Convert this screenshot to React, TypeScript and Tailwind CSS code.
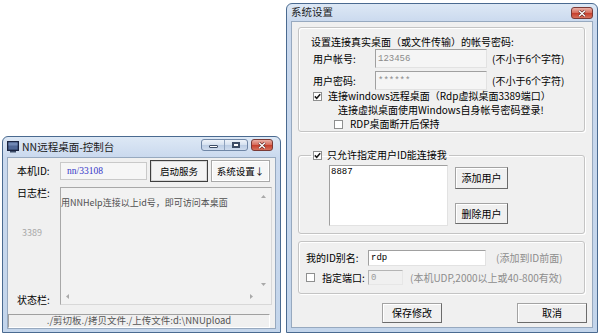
import React from "react";

function CheckBox({ checked = false }: { checked?: boolean }) {
  return (
    <span className="flex h-[9px] w-[9px] shrink-0 items-center justify-center border border-[#8e8f8f] bg-white">
      {checked && (
        <svg viewBox="0 0 7 7" className="h-[7px] w-[7px]">
          <path d="M0.8 3.4 L2.7 5.3 L6.2 1.2" fill="none" stroke="#1a1a1a" strokeWidth="1.5" />
        </svg>
      )}
    </span>
  );
}

function Btn({ children, className = "" }: { children: React.ReactNode; className?: string }) {
  return (
    <button className={`flex shrink-0 items-center justify-center border border-[#a3a3a3] border-r-[#6b6b6b] border-b-[#6b6b6b] bg-[#f0f0f0] text-[10px] leading-none text-black shadow-[inset_1px_1px_0_#ffffff] ${className}`}>
      {children}
    </button>
  );
}

function Arrow({ dir }: { dir: "up" | "down" | "left" | "right" }) {
  const d = {
    up: "M0 4 L2.5 1 L5 4 Z",
    down: "M0 1 L2.5 4 L5 1 Z",
    left: "M4 0 L1 2.5 L4 5 Z",
    right: "M1 0 L4 2.5 L1 5 Z",
  }[dir];
  return (
    <svg viewBox="0 0 5 5" className="h-[5px] w-[5px]">
      <path d={d} fill="#a9a9a9" />
    </svg>
  );
}

function MonitorIcon() {
  return (
    <svg viewBox="0 0 12 12" className="h-[12px] w-[12px] shrink-0">
      <rect x="0.5" y="0.5" width="11" height="9" fill="#27385a" stroke="#1a2440" />
      <rect x="1.5" y="1.5" width="9" height="7" fill="#4f6796" />
      <rect x="1.5" y="1.5" width="9" height="3" fill="#7088b4" />
      <rect x="3" y="10" width="6" height="1.5" fill="#3a4a66" />
    </svg>
  );
}

function CloseBtn({ className = "" }: { className?: string }) {
  return (
    <div className={`flex h-[12px] w-[22px] items-center justify-center rounded-[3px] border border-[#7a3a36] bg-[linear-gradient(180deg,#eab0a6_0%,#d8705f_45%,#c7412e_55%,#d6705c_100%)] ${className}`}>
      <svg viewBox="0 0 8 7" className="h-[7px] w-[8px]">
        <path d="M1 0.8 L7 6.2 M7 0.8 L1 6.2" stroke="#5a2420" strokeWidth="2.6" />
        <path d="M1 0.8 L7 6.2 M7 0.8 L1 6.2" stroke="#ffffff" strokeWidth="1.4" />
      </svg>
    </div>
  );
}

function LeftWindow() {
  return (
    <div className="absolute left-[2px] top-[136px] flex h-[197px] w-[279px] flex-col rounded-t-[6px] border border-[#4a6a90] bg-[linear-gradient(180deg,#dde8f5_0px,#cad9ee_20px,#c3d5eb_100%)] px-[4px] pb-[4px]">
      <div className="flex h-[20px] shrink-0 items-center">
        <MonitorIcon />
        <span className="ml-[3px] text-[10.5px] leading-none text-[#1b1b1b]">NN远程桌面-控制台</span>
        <div className="ml-auto mr-[3px] flex self-start pt-[2px]">
          <div className="flex h-[12px] overflow-hidden rounded-[3px] border border-[#6f86a6] bg-[linear-gradient(180deg,#eef3fa_0%,#d7e2f0_45%,#bccde4_55%,#cfdcee_100%)]">
            <div className="flex w-[23px] items-end justify-center border-r border-[#8ea2bd] pb-[2px]">
              <div className="h-[3px] w-[9px] rounded-[1px] border border-[#3d4d66] bg-white" />
            </div>
            <div className="flex w-[22px] items-center justify-center">
              <div className="h-[6px] w-[8px] border border-[#3d4d66] bg-white shadow-[inset_0_0_0_1px_#3d4d66]" />
            </div>
          </div>
          <CloseBtn className="ml-[3px]" />
        </div>
      </div>
      <div className="flex flex-1 flex-col border border-[#97a9bf] bg-[#f0f0f0] pt-[2px] text-[10px] leading-[12px]">
        <div className="flex h-[22px] items-center pl-[9px]">
          <span className="w-[43px]">本机ID:</span>
          <div className="flex h-[18px] w-[87px] items-center border border-[#c9c9c9] bg-[#f6f6f6] pl-[6px] font-['Liberation_Serif',serif] text-[9.5px] text-[#3535c8]">
            nn/33108
          </div>
          <button className="ml-[3px] flex h-[22px] w-[58px] items-center justify-center border border-[#3f3f3f] bg-[#f3f3f3] text-[9.5px] shadow-[inset_0_0_0_1px_#d6d6d6]">
            启动服务
          </button>
          <button className="ml-[3px] flex h-[22px] w-[59px] items-center justify-center border border-[#a9a9a9] bg-[#f6f6f6] text-[9.5px] shadow-[inset_0_0_0_1px_#ffffff]">
            系统设置↓
          </button>
        </div>
        <div className="mt-[5px] flex pl-[9px]">
          <div className="flex w-[43px] flex-col">
            <span>日志栏:</span>
            <span className="mt-[28px] pl-[5px] text-[9px] text-[#a8a8a8]">3389</span>
            <span className="mt-[55px]">状态栏:</span>
          </div>
          <div className="grid h-[118px] w-[212px] grid-cols-[1fr_16px] grid-rows-[1fr_15px] border border-[#a8a8a8] border-r-[#d8d8d8] border-b-[#d8d8d8] bg-[#f2f2f2]">
            <div className="overflow-hidden whitespace-nowrap pt-[9px] text-[9px] leading-[12px] text-[#505050]">
              用NNHelp连接以上id号，即可访问本桌面
            </div>
            <div className="flex flex-col items-center justify-between pb-[2px] pt-[6px]">
              <Arrow dir="up" />
              <Arrow dir="down" />
            </div>
            <div className="flex items-center justify-between pl-[4px] pr-[1px]">
              <Arrow dir="left" />
              <Arrow dir="right" />
            </div>
            <div />
          </div>
        </div>
        <div className="mt-[8px] flex h-[14px] w-[262px] items-center justify-center border border-[#a0a0a0] border-r-[#ffffff] border-b-[#ffffff] text-[9.5px] leading-none text-[#555555]">
          ./剪切板./拷贝文件./上传文件:d:\NNUpload
        </div>
      </div>
    </div>
  );
}

function RightWindow() {
  return (
    <div className="absolute left-[286px] top-[3px] flex h-[330px] w-[312px] flex-col rounded-t-[6px] border border-[#4a6a90] bg-[linear-gradient(180deg,#dde8f5_0px,#cad9ee_18px,#c3d5eb_100%)] px-[4px] pb-[4px]">
      <div className="flex h-[17px] shrink-0 items-center">
        <span className="text-[10.5px] leading-none text-[#1b1b1b]">系统设置</span>
        <CloseBtn className="ml-auto self-start mt-[3px]" />
      </div>
      <div className="flex flex-1 flex-col border border-[#97a9bf] bg-[#f0f0f0] text-[10px] leading-[12px]">
        {/* group 1 */}
        <div className="ml-[6px] mr-[7px] mt-[5px] flex h-[105px] flex-col rounded-[3px] border border-[#c4c4c4] pl-[12px] pt-[8px] shadow-[inset_1px_1px_0_#ffffff,1px_1px_0_#ffffff]">
          <span>设置连接真实桌面（或文件传输）的帐号密码:</span>
          <div className="ml-[2px] mt-[1px] flex h-[19px] items-center">
            <span className="w-[62px]">用户帐号:</span>
            <div className="flex h-[19px] w-[112px] items-center border border-[#a0a0a0] border-r-[#e2e2e2] border-b-[#e2e2e2] bg-[#f5f5f5] pl-[2px] font-['Liberation_Mono',monospace] text-[9px] text-[#8a8a8a]">
              123456
            </div>
            <span className="ml-[5px]">(不小于6个字符)</span>
          </div>
          <div className="ml-[2px] mt-[3px] flex h-[19px] items-center">
            <span className="w-[62px]">用户密码:</span>
            <div className="flex h-[19px] w-[112px] items-center border border-[#a0a0a0] border-r-[#e2e2e2] border-b-[#e2e2e2] bg-[#f5f5f5] pl-[2px] font-['Liberation_Mono',monospace] text-[9px] text-[#8a8a8a]">
              ******
            </div>
            <span className="ml-[5px]">(不小于6个字符)</span>
          </div>
          <div className="ml-[2px] flex h-[12px] items-center gap-[6px]">
            <CheckBox checked />
            <span>连接windows远程桌面（Rdp虚拟桌面3389端口）</span>
          </div>
          <span className="ml-[27px] mt-[2px]">连接虚拟桌面使用Windows自身帐号密码登录!</span>
          <div className="ml-[23px] mt-[2px] flex h-[12px] items-center gap-[7px]">
            <CheckBox />
            <span>RDP桌面断开后保持</span>
          </div>
        </div>

        {/* group 2 */}
        <fieldset className="ml-[6px] mr-[7px] mt-[17px] h-[85px] rounded-[3px] border border-[#c4c4c4] shadow-[inset_1px_1px_0_#ffffff,1px_1px_0_#ffffff]">
          <legend className="ml-[12px] flex h-[12px] items-center gap-[5px] px-[2px]">
            <CheckBox checked />
            <span>只允许指定用户ID能连接我</span>
          </legend>
          <div className="mt-[4px] flex pl-[30px]">
            <div className="h-[61px] w-[119px] border border-[#a0a0a0] border-r-[#e2e2e2] border-b-[#e2e2e2] bg-white pl-[1px] pt-[1px] font-['Liberation_Mono',monospace] text-[9px] leading-[11px]">
              8887
            </div>
            <div className="ml-[7px] flex flex-col">
              <Btn className="mt-[2px] h-[22px] w-[53px]">添加用户</Btn>
              <Btn className="mt-[14px] h-[21px] w-[53px]">删除用户</Btn>
            </div>
          </div>
        </fieldset>

        {/* group 3 */}
        <div className="ml-[6px] mr-[7px] mt-[7px] flex h-[53px] flex-col rounded-[3px] border border-[#c4c4c4] pl-[7px] pt-[8px] shadow-[inset_1px_1px_0_#ffffff,1px_1px_0_#ffffff]">
          <div className="flex h-[16px] items-center">
            <span className="w-[62px]">我的ID别名:</span>
            <div className="flex h-[16px] w-[118px] items-center border border-[#a0a0a0] border-r-[#e2e2e2] border-b-[#e2e2e2] bg-white pl-[2px] font-['Liberation_Mono',monospace] text-[9px]">
              rdp
            </div>
            <span className="ml-[10px] text-[#8d8d8d]">(添加到ID前面)</span>
          </div>
          <div className="mt-[4px] flex h-[15px] items-center">
            <CheckBox />
            <span className="ml-[7px] w-[46px]">指定端口:</span>
            <div className="flex h-[15px] w-[35px] items-center border border-[#b4b4b4] border-r-[#e6e6e6] border-b-[#e6e6e6] bg-[#f0f0f0] pl-[2px] font-['Liberation_Mono',monospace] text-[9px] text-[#9a9a9a]">
              0
            </div>
            <span className="ml-[7px] text-[#8d8d8d]">(本机UDP,2000以上或40-800有效)</span>
          </div>
        </div>

        <div className="mt-[9px] flex">
          <Btn className="ml-[90px] h-[20px] w-[60px]">保存修改</Btn>
          <Btn className="ml-[75px] h-[20px] w-[70px]">取消</Btn>
        </div>
      </div>
    </div>
  );
}

export default function App() {
  return (
    <div className="relative h-[335px] w-[600px] overflow-hidden bg-white font-['Noto_Sans_CJK_SC',sans-serif] text-black">
      <LeftWindow />
      <RightWindow />
    </div>
  );
}
